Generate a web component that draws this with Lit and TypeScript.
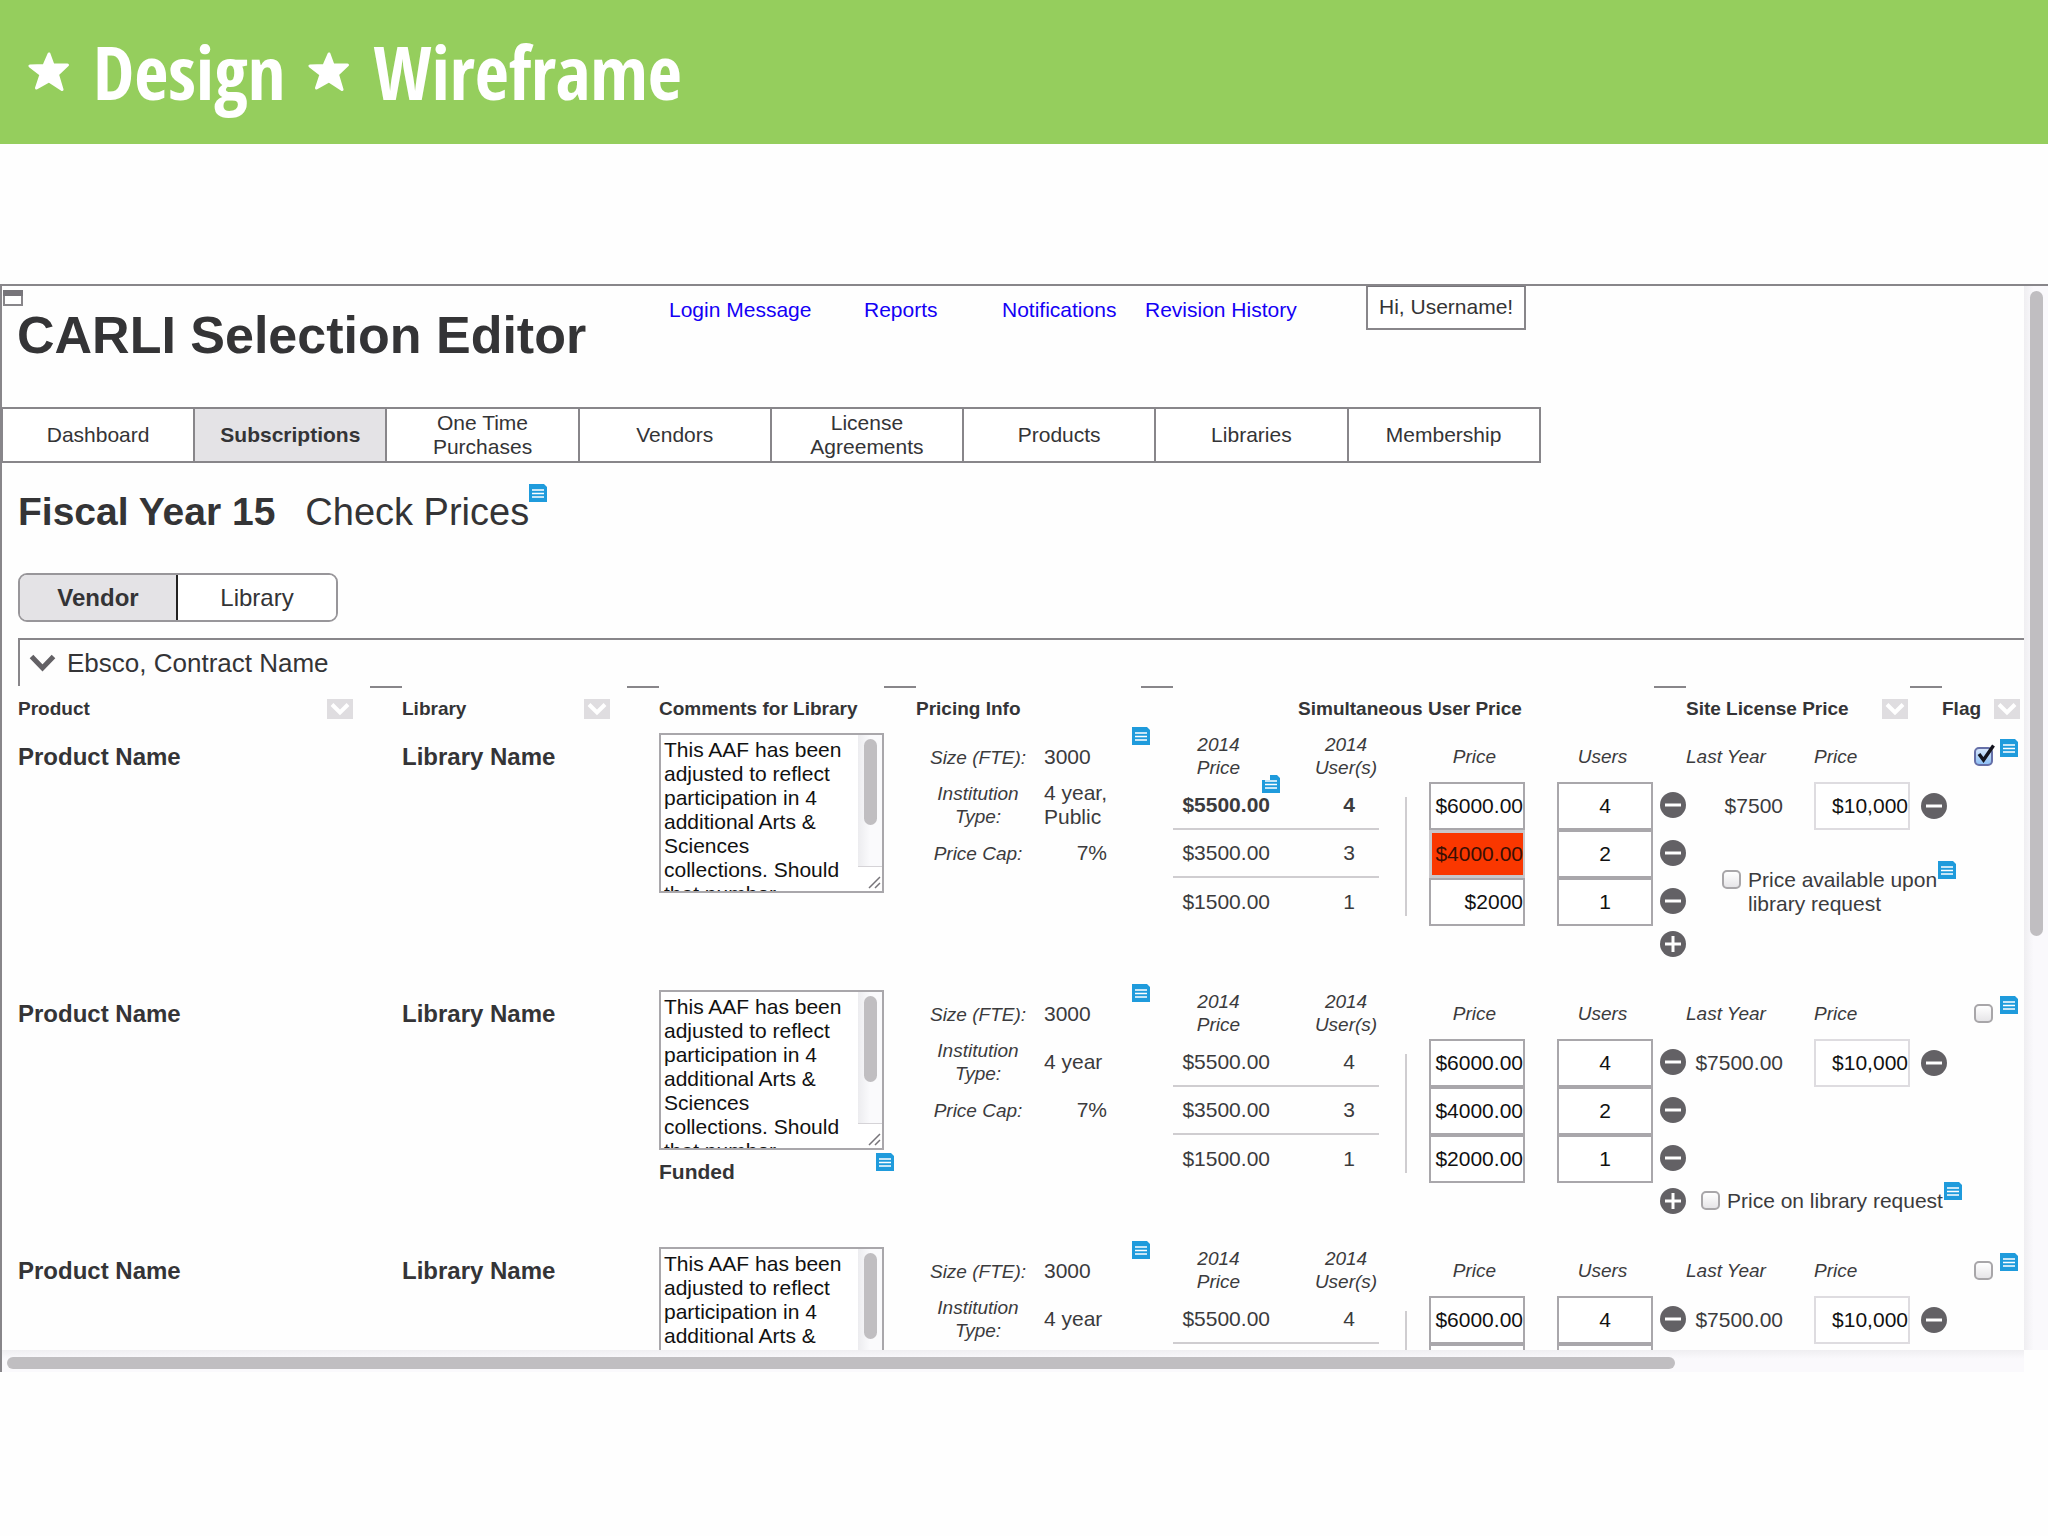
import { LitElement, html, css, svg, nothing } from "lit";
import { customElement, property } from "lit/decorators.js";

interface Tier {
  oldPrice: string;
  oldUsers: string;
  price: string;
  users: string;
  alert?: boolean;
}

interface Row {
  type: string[];
  tiers: Tier[];
  emphasised: boolean;
  funded: boolean;
  lastYear: string;
  request?: "stacked" | "inline";
  flagged: boolean;
}

const COMMENT =
  "This AAF has been adjusted to reflect participation in 4 additional Arts & Sciences collections. Should that number";

const LINKS = ["Login Message", "Reports", "Notifications", "Revision History"];

const TABS = [
  "Dashboard",
  "Subscriptions",
  "One Time Purchases",
  "Vendors",
  "License Agreements",
  "Products",
  "Libraries",
  "Membership",
];

const tiers = (last: string, alert = false): Tier[] => [
  { oldPrice: "$5500.00", oldUsers: "4", price: "$6000.00", users: "4" },
  { oldPrice: "$3500.00", oldUsers: "3", price: "$4000.00", users: "2", alert },
  { oldPrice: "$1500.00", oldUsers: "1", price: last, users: "1" },
];

const ROWS: Row[] = [
  {
    type: ["4 year,", "Public"],
    tiers: tiers("$2000", true),
    emphasised: true,
    funded: false,
    lastYear: "$7500",
    request: "stacked",
    flagged: true,
  },
  {
    type: ["4 year"],
    tiers: tiers("$2000.00"),
    emphasised: false,
    funded: true,
    lastYear: "$7500.00",
    request: "inline",
    flagged: false,
  },
  {
    type: ["4 year"],
    tiers: tiers("$2000.00"),
    emphasised: false,
    funded: false,
    lastYear: "$7500.00",
    flagged: false,
  },
];

@customElement("note-icon")
class NoteIcon extends LitElement {
  @property({ type: Boolean }) notched = false;

  static styles = css`
    :host {
      display: block;
      flex: none;
      width: 18px;
      height: 18px;
    }
    svg {
      display: block;
    }
  `;

  render() {
    const outline = this.notched
      ? "M8 0H15L18 3V18H0V5H8Z"
      : "M0 0H15L18 3V18H0Z";
    return html`<svg width="18" height="18" viewBox="0 0 18 18" aria-hidden="true">
      <path d=${outline} fill="#1f9bdc" />
      <path d="M3 6H15M3 9.500H15M3 13H15" stroke="#fff" stroke-width="1.700" />
    </svg>`;
  }
}

@customElement("round-button")
class RoundButton extends LitElement {
  @property() kind: "minus" | "plus" = "minus";
  @property() label = "";

  static styles = css`
    :host {
      display: block;
      flex: none;
    }
    .button {
      display: block;
      width: 26px;
      height: 26px;
      padding: 0;
      border: 0;
      background: none;
      cursor: pointer;
    }
    svg {
      display: block;
    }
  `;

  render() {
    return html`<button class="button" type="button" aria-label=${this.label}>
      <svg width="26" height="26" viewBox="0 0 26 26" aria-hidden="true">
        <circle cx="13" cy="13" r="13" fill="#636165" />
        <path d="M5 13H21" stroke="#fff" stroke-width="3" />
        ${this.kind === "plus"
          ? svg`<path d="M13 5V21" stroke="#fff" stroke-width="3" />`
          : nothing}
      </svg>
    </button>`;
  }
}

@customElement("check-box")
class CheckBox extends LitElement {
  @property({ type: Boolean }) checked = false;
  @property() label = "";

  static styles = css`
    :host {
      display: block;
    }
    .wrap {
      display: flex;
      align-items: flex-start;
      gap: 7px;
      position: relative;
      font: 21px/24px "Liberation Sans", Arial, sans-serif;
      color: #3b3b3d;
      white-space: pre;
    }
    .box {
      appearance: none;
      flex: none;
      box-sizing: border-box;
      width: 19px;
      height: 19px;
      margin: 2px 0 0;
      border: 2px solid #a8a6a9;
      border-radius: 5px;
      background: linear-gradient(#fff, #e6e5e8);
    }
    .box:checked {
      border-color: #6670a8;
      background: linear-gradient(#d6e6fb, #8fc0f5);
    }
    .tick {
      position: absolute;
      left: 3px;
      top: -1px;
      pointer-events: none;
    }
  `;

  render() {
    const described = this.label.startsWith("Price");
    return html`<label class="wrap"
      ><input
        class="box"
        type="checkbox"
        aria-label=${described ? nothing : this.label}
        .checked=${this.checked}
      />${described ? html`<span>${this.label}</span>` : nothing}${this.checked
        ? html`<svg class="tick" width="18" height="20" viewBox="0 0 18 20" aria-hidden="true">
            <path d="M2 10L6.500 16L16.500 1.500" fill="none" stroke="#14141f" stroke-width="3.400" />
          </svg>`
        : nothing}</label
    >`;
  }
}

@customElement("app-root")
class AppRoot extends LitElement {
  static styles = css`
    :host {
      display: flex;
      flex-direction: column;
      height: 100vh;
      overflow: hidden;
      background: #fefefe;
      color: #343436;
      font: 21px/24px "Liberation Sans", Arial, sans-serif;
    }
    button,
    input,
    textarea {
      font: inherit;
      color: inherit;
    }
    svg {
      display: block;
      flex: none;
    }

    .banner {
      flex: none;
      display: flex;
      align-items: center;
      gap: 23px;
      height: 144px;
      padding: 0 28px;
      box-sizing: border-box;
      background: #95ce5d;
      color: #fff;
      font: bold 74px/80px "Liberation Sans Narrow", "Open Sans Condensed", "Liberation Sans", sans-serif;
    }
    .banner-word {
      font: inherit;
      margin: 0;
    }

    .window {
      flex: 1;
      min-height: 0;
      display: grid;
      grid-template-columns: minmax(0, 1fr) 24px;
      grid-template-rows: minmax(0, 1fr) 22px;
      margin: 140px 0 164px;
      border-top: 2px solid #88868a;
      border-left: 2px solid #88868a;
    }
    .view {
      overflow: hidden;
    }
    .track-y {
      display: grid;
      grid-template-rows: 646fr 410fr;
      padding: 5px 5px 5px 6px;
      background: linear-gradient(90deg, #efeef1, #faf9fc 40%);
    }
    .track-x {
      display: grid;
      grid-template-columns: 1667fr 344fr;
      padding: 7px 5px 3px;
      background: linear-gradient(#efeef1, #faf9fc 40%);
    }
    .thumb {
      border-radius: 7px;
      background: #c0bec1;
    }

    .top {
      display: flex;
      height: 121px;
    }
    .brand {
      width: 667px;
      padding: 4px 0 0 1px;
      box-sizing: border-box;
    }
    .title {
      margin: 0;
      padding-left: 14px;
      font-size: 52px;
      line-height: 58px;
    }
    .links {
      display: grid;
      grid-template-columns: 195px 138px 143px 221px;
      align-content: start;
      padding-top: 12px;
    }
    .link {
      color: #1400f5;
      text-decoration: none;
      white-space: nowrap;
    }
    .user {
      align-self: flex-start;
      padding: 8px 11px 9px;
      border: 2px solid #88868a;
      border-top: 1px solid #77757a;
      background: #fff;
    }

    .tabs {
      display: grid;
      grid-template-columns: repeat(8, 1fr);
      width: calc(76% + 2px);
      height: 56px;
      border: solid #88868a;
      border-width: 2px 0 2px 1px;
      box-sizing: border-box;
    }
    .tab {
      padding: 0 28px;
      border: 0;
      border-right: 2px solid #88868a;
      background: #fff;
      line-height: 24px;
    }
    .tab.current {
      background: #e4e3e6;
      font-weight: bold;
      padding: 0;
    }

    .heading {
      display: flex;
      align-items: flex-start;
      padding: 21px 0 0 16px;
      height: 89px;
    }
    .heading-text {
      margin: 0;
      padding-top: 6px;
      font-size: 39px;
      line-height: 44px;
    }
    .heading-text.light {
      margin-left: 30px;
      font-weight: normal;
      font-size: 38px;
    }

    .switch {
      display: inline-grid;
      grid-template-columns: 158px 158px;
      height: 49px;
      margin-left: 16px;
      box-sizing: border-box;
      border: 2px solid #98969a;
      border-radius: 9px;
      overflow: hidden;
      font-size: 24px;
      vertical-align: top;
    }
    .choice {
      border: 0;
      background: #fff;
    }
    .choice.current {
      background: #e4e3e6;
      border-right: 2px solid #222;
      font-weight: bold;
    }

    .contract {
      display: flex;
      align-items: center;
      gap: 11px;
      margin: 16px 0 0 16px;
      height: 46px;
      padding-left: 9px;
      border: solid #88868a;
      border-width: 2px 0 0 2px;
    }
    .fold {
      padding: 0;
      border: 0;
      background: none;
    }
    .contract-name {
      margin: 0;
      font-size: 26px;
      line-height: 30px;
      font-weight: normal;
    }

    .grid {
      width: calc(100% - 16px);
      margin-left: 16px;
      table-layout: fixed;
      border-collapse: collapse;
    }
    .col-library,
    .col-comments,
    .col-info {
      width: 257px;
    }
    .col-users {
      width: 513px;
    }
    .col-site {
      width: 256px;
    }
    .col-flag {
      width: 82px;
    }
    .head {
      height: 41px;
      padding: 0;
      vertical-align: top;
      font-size: 19px;
      text-align: left;
      background: linear-gradient(#88868a, #88868a) right top / 32px 2px no-repeat;
    }
    .head.last {
      background: none;
    }
    .head-line {
      display: flex;
      justify-content: space-between;
      align-items: center;
      padding: 11px 49px 0 0;
      white-space: nowrap;
    }
    .head-line.tight {
      padding-right: 34px;
    }
    .head-line.edge {
      padding-right: 4px;
    }
    .head-line.centered {
      justify-content: center;
      padding-right: 39px;
    }
    .sort {
      padding: 0;
      border: 0;
      background: none;
    }
    .cell {
      height: 257px;
      padding: 0;
      vertical-align: top;
    }
    .name {
      margin: 0;
      padding-top: 16px;
      font-size: 24px;
      line-height: 28px;
      font-weight: bold;
    }

    .comment {
      display: flex;
      width: 225px;
      height: 160px;
      margin-top: 6px;
      box-sizing: border-box;
      border: 2px solid #a9a7ab;
      background: #fff;
    }
    .comment-text {
      flex: 1;
      min-width: 0;
      margin: 0;
      padding: 3px 2px 0 3px;
      border: 0;
      resize: none;
      overflow: hidden;
      background: none;
      color: #111;
    }
    .comment-bar {
      display: flex;
      flex-direction: column;
      justify-content: space-between;
      width: 24px;
      padding-top: 4px;
      box-sizing: border-box;
      background: linear-gradient(90deg, #ececef, #fafafc 50%);
    }
    .comment-thumb {
      width: 13px;
      height: 86px;
      margin-left: 6px;
      border-radius: 7px;
      background: #c0bec1;
    }
    .comment-grip {
      display: flex;
      justify-content: flex-end;
      padding: 9px 1px 2px 0;
      border-top: 1px solid #d5d3d7;
      background: #fff;
    }
    .funded {
      display: flex;
      justify-content: space-between;
      width: 235px;
      margin-top: 3px;
    }
    .funded-text {
      padding-top: 7px;
      font-weight: bold;
    }

    .info {
      display: flex;
      align-items: flex-start;
      gap: 25px;
      padding-left: 13px;
    }
    .facts {
      display: grid;
      grid-template-columns: 98px 63px;
      grid-auto-rows: 48px;
      align-items: center;
      column-gap: 17px;
      margin: 0;
      padding-top: 6px;
      color: #3b3b3d;
    }
    .fact {
      font-size: 19px;
      line-height: 23px;
      font-style: italic;
      text-align: center;
    }
    .value {
      margin: 0;
      white-space: pre;
    }
    .value.right {
      text-align: right;
    }

    .prices {
      display: flex;
      color: #3b3b3d;
    }
    .history {
      width: 207px;
    }
    .sub {
      height: 55px;
      padding: 18px 5px 0 0;
      box-sizing: border-box;
      font-size: 19px;
      line-height: 23px;
      font-style: italic;
      text-align: center;
    }
    .sub-pair {
      display: grid;
      grid-template-columns: 91px 66px;
      justify-content: space-between;
      padding: 6px 0 0;
    }
    .past {
      display: grid;
      grid-template-columns: 97px 60px;
      justify-content: space-between;
      align-items: center;
      height: 48px;
      box-sizing: border-box;
      border-bottom: 2px solid #cfcdd0;
      position: relative;
    }
    .past:last-child {
      border-bottom: 0;
    }
    .past.strong {
      font-weight: bold;
    }
    .past-price {
      text-align: right;
    }
    .past-users {
      text-align: center;
    }
    .past-note {
      position: absolute;
      left: 89px;
      top: -7px;
    }
    .rule {
      width: 2px;
      height: 119px;
      margin: 70px 22px 0 26px;
      background: #cfcdd0;
    }
    .entry {
      width: 96px;
    }
    .entry + .entry {
      margin-left: 32px;
    }
    .field {
      display: block;
      width: 96px;
      height: 48px;
      padding: 0;
      box-sizing: border-box;
      border: 2px solid #a9a7ab;
      border-radius: 0;
      background: #fff;
      color: #111;
      text-align: right;
    }
    .field.count {
      text-align: center;
    }
    .field.alert {
      border-color: #c9c7ca;
      border-width: 3px 2px 3px 3px;
      background: #fa3700 padding-box;
      color: #3a0f04;
    }
    .field.pale {
      border-color: #dedce0;
    }
    .actions {
      display: grid;
      grid-template-rows: repeat(3, 48px) 38px;
      align-items: center;
      padding: 54px 0 0 7px;
    }

    .site {
      width: 276px;
      margin-right: -20px;
      color: #3b3b3d;
    }
    .site-heads {
      display: grid;
      grid-template-columns: 128px 96px;
      height: 55px;
      padding-top: 18px;
      box-sizing: border-box;
      font-size: 19px;
      line-height: 23px;
      font-style: italic;
    }
    .site-line {
      display: flex;
      align-items: center;
    }
    .site-last {
      width: 97px;
      margin-right: 31px;
      text-align: right;
    }
    .site-line round-button {
      margin-left: 11px;
    }
    .request {
      display: flex;
      gap: 1px;
    }
    .request check-box {
      padding-top: 7px;
    }
    .request.stacked {
      padding: 31px 0 0 36px;
    }
    .request.inline {
      padding: 95px 0 0 15px;
    }

    .flag {
      display: flex;
      align-items: flex-start;
      gap: 7px;
      padding: 12px 0 0 32px;
    }
    .flag check-box {
      padding-top: 6px;
    }
  `;

  private star() {
    return html`<svg width="42" height="40" viewBox="0 0 42 40" aria-hidden="true">
      <path
        d="M21 2L25 13L39.500 13L29.500 22.500L34 37.500L21 29L8.500 36L13 22.500L2 14L16 13.500Z"
        fill="#fff"
        stroke="#fff"
        stroke-width="3"
        stroke-linejoin="round"
      />
    </svg>`;
  }

  private sorter(name: string) {
    return html`<button class="sort" type="button" aria-label="Sort by ${name}">
      <svg width="26" height="20" viewBox="0 0 26 20" aria-hidden="true">
        <path d="M0 0H26V20H0Z" fill="#dfdde0" />
        <path d="M5 5.500L13 13.500L21 5.500" fill="none" stroke="#fff" stroke-width="4" />
      </svg>
    </button>`;
  }

  private comments(row: Row) {
    return html`<div class="comment">
        <textarea class="comment-text" aria-label="Comments for Library" .value=${COMMENT}></textarea>
        <div class="comment-bar">
          <div class="comment-thumb"></div>
          <div class="comment-grip">
            <svg width="13" height="13" viewBox="0 0 13 13" aria-hidden="true">
              <path d="M1 12L12 1M7 12L12 7" stroke="#77757a" stroke-width="1.500" />
            </svg>
          </div>
        </div>
      </div>
      ${row.funded
        ? html`<div class="funded"><span class="funded-text">Funded</span><note-icon></note-icon></div>`
        : nothing}`;
  }

  private info(row: Row) {
    return html`<div class="info">
      <dl class="facts">
        <dt class="fact">Size (FTE):</dt>
        <dd class="value">3000</dd>
        <dt class="fact">Institution Type:</dt>
        <dd class="value">${row.type.join("\n")}</dd>
        <dt class="fact">Price Cap:</dt>
        <dd class="value right">7%</dd>
      </dl>
      <note-icon></note-icon>
    </div>`;
  }

  private prices(row: Row) {
    return html`<div class="prices">
      <div class="history">
        <div class="sub sub-pair"><span>2014<br />Price</span><span>2014<br />User(s)</span></div>
        ${row.tiers.map(
          (t, i) => html`<div class="past ${row.emphasised && i === 0 ? "strong" : ""}">
            <span class="past-price">${t.oldPrice}</span>
            <span class="past-users">${t.oldUsers}</span>
            ${row.emphasised && i === 0
              ? html`<note-icon class="past-note" notched></note-icon>`
              : nothing}
          </div>`
        )}
      </div>
      <div class="rule"></div>
      <div class="entry">
        <div class="sub">Price</div>
        ${row.tiers.map(
          (t) => html`<input class="field ${t.alert ? "alert" : ""}" aria-label="Price" .value=${t.price} />`
        )}
      </div>
      <div class="entry">
        <div class="sub">Users</div>
        ${row.tiers.map((t) => html`<input class="field count" aria-label="Users" .value=${t.users} />`)}
      </div>
      <div class="actions">
        ${row.tiers.map(() => html`<round-button label="Remove tier"></round-button>`)}
        <round-button kind="plus" label="Add tier"></round-button>
      </div>
    </div>`;
  }

  private site(row: Row) {
    const text = row.request === "stacked" ? "Price available upon\nlibrary request" : "Price on library request";
    return html`<div class="site">
      <div class="site-heads"><span>Last Year</span><span>Price</span></div>
      <div class="site-line">
        <span class="site-last">${row.lastYear}</span>
        <input class="field pale" aria-label="Site license price" .value=${"$10,000"} />
        <round-button label="Remove site license price"></round-button>
      </div>
      ${row.request
        ? html`<div class="request ${row.request}">
            <check-box label=${text}></check-box><note-icon></note-icon>
          </div>`
        : nothing}
    </div>`;
  }

  private row(row: Row) {
    return html`<tr>
      <td class="cell"><p class="name">Product Name</p></td>
      <td class="cell"><p class="name">Library Name</p></td>
      <td class="cell">${this.comments(row)}</td>
      <td class="cell">${this.info(row)}</td>
      <td class="cell">${this.prices(row)}</td>
      <td class="cell">${this.site(row)}</td>
      <td class="cell">
        <div class="flag">
          <check-box label="Flag" ?checked=${row.flagged}></check-box><note-icon></note-icon>
        </div>
      </td>
    </tr>`;
  }

  render() {
    return html`
      <header class="banner">
        ${this.star()}<h1 class="banner-word">Design</h1>
        ${this.star()}<h1 class="banner-word">Wireframe</h1>
      </header>
      <main class="window">
        <div class="view">
          <div class="top">
            <div class="brand">
              <svg width="20" height="16" viewBox="0 0 20 16" aria-hidden="true">
                <path d="M1 1H19V15H1Z" fill="#fff" stroke="#88868a" stroke-width="2" />
                <path d="M0 0H20V6H0Z" fill="#77757a" />
              </svg>
              <h2 class="title">CARLI Selection Editor</h2>
            </div>
            <nav class="links">${LINKS.map((l) => html`<a class="link" href="#">${l}</a>`)}</nav>
            <div class="user">Hi, Username!</div>
          </div>
          <nav class="tabs">
            ${TABS.map(
              (t) => html`<button type="button" class="tab ${t === "Subscriptions" ? "current" : ""}">${t}</button>`
            )}
          </nav>
          <div class="heading">
            <h3 class="heading-text">Fiscal Year 15</h3>
            <h3 class="heading-text light">Check Prices</h3>
            <note-icon></note-icon>
          </div>
          <div class="switch">
            <button type="button" class="choice current">Vendor</button>
            <button type="button" class="choice">Library</button>
          </div>
          <div class="contract">
            <button class="fold" type="button" aria-label="Collapse contract">
              <svg width="27" height="18" viewBox="0 0 27 18" aria-hidden="true">
                <path d="M2.500 2.500L13.500 14L24.500 2.500" fill="none" stroke="#636165" stroke-width="5" />
              </svg>
            </button>
            <h4 class="contract-name">Ebsco, Contract Name</h4>
          </div>
          <table class="grid">
            <colgroup>
              <col />
              <col class="col-library" />
              <col class="col-comments" />
              <col class="col-info" />
              <col class="col-users" />
              <col class="col-site" />
              <col class="col-flag" />
            </colgroup>
            <thead>
              <tr>
                <th class="head"><div class="head-line">Product ${this.sorter("product")}</div></th>
                <th class="head"><div class="head-line">Library ${this.sorter("library")}</div></th>
                <th class="head"><div class="head-line">Comments for Library</div></th>
                <th class="head"><div class="head-line">Pricing Info</div></th>
                <th class="head"><div class="head-line centered">Simultaneous User Price</div></th>
                <th class="head">
                  <div class="head-line tight">Site License Price ${this.sorter("site license price")}</div>
                </th>
                <th class="head last"><div class="head-line edge">Flag ${this.sorter("flag")}</div></th>
              </tr>
            </thead>
            <tbody>
              ${ROWS.map((r) => this.row(r))}
            </tbody>
          </table>
        </div>
        <div class="track-y"><div class="thumb"></div></div>
        <div class="track-x"><div class="thumb"></div></div>
      </main>
    `;
  }
}
